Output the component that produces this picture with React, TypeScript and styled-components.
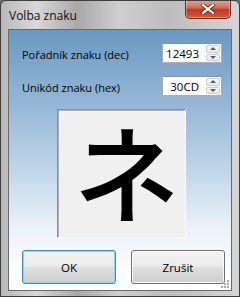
import React from "react";
import styled, { createGlobalStyle } from "styled-components";

const Global = createGlobalStyle`
  html, body { margin: 0; padding: 0; background: #6b6b6b; }
  body { font-family: "Open Sans", "Noto Sans", sans-serif; }
  * { box-sizing: border-box; }
`;

const Window = styled.div`
  width: 240px;
  height: 297px;
  display: flex;
  flex-direction: column;
  border: 1px solid #3e3e3e;
  border-radius: 6px 6px 0 0;
  background: linear-gradient(90deg, #b9b9b9 0%, #d8d8d8 15%, #a9a9a9 32%, #cfcfcf 50%, #bdbdbd 70%, #d4d4d4 100%);
  overflow: hidden;
`;

const TitleBar = styled.div`
  height: 28px;
  display: flex;
  align-items: flex-start;
  justify-content: space-between;
  padding-left: 8px;
  padding-right: 8px;
`;

const Title = styled.div`
  font-family: "Open Sans", "Noto Sans", sans-serif;
  font-size: 12px;
  color: #111;
  margin-top: 6px;
`;

const CloseButton = styled.div`
  width: 46px;
  height: 19px;
  margin-top: -1px;
  border: 1px solid #6b2a22;
  border-top: none;
  border-radius: 0 0 5px 5px;
  background: linear-gradient(180deg, #e8a595 0%, #d46f5c 40%, #c0391f 55%, #cf5a3d 100%);
  display: flex;
  align-items: center;
  justify-content: center;
  box-shadow: inset 0 0 0 1px rgba(255, 255, 255, 0.35);
`;

const Client = styled.div`
  flex: 1;
  margin: 0 7px 5px 7px;
  border: 1px solid #6a6a6a;
  background: linear-gradient(180deg, #6b99c2 0%, #8fb3d4 25%, #c2d7ea 55%, #e9f1f8 75%, #ffffff 95%);
  display: flex;
  flex-direction: column;
  position: relative;
  padding-top: 13px;
`;

const FieldRow = styled.div`
  display: flex;
  align-items: center;
  justify-content: space-between;
  padding: 0 9px 0 13px;
  margin-bottom: 13px;
`;

const Label = styled.div`
  font-size: 11px;
  color: #000;
  margin-top: 3px;
`;

const Spin = styled.div`
  width: 60px;
  height: 20px;
  display: flex;
  border: 1px solid #abadb3;
  border-top-color: #8e9099;
  background: #fff;
  padding: 1px 1px 1px 0;
`;

const SpinValue = styled.div`
  flex: 1;
  font-size: 11.5px;
  text-align: right;
  padding-right: 7px;
  line-height: 17px;
  color: #000;
`;

const SpinButtons = styled.div`
  width: 14px;
  display: flex;
  flex-direction: column;
  gap: 1px;
`;

const SpinBtn = styled.div`
  flex: 1;
  border: 1px solid #c8ccd4;
  border-radius: 2px;
  background: linear-gradient(180deg, #f7f8fa 0%, #e6e8ec 100%);
  display: flex;
  align-items: center;
  justify-content: center;
`;

const Arrow = styled.div<{ $down?: boolean }>`
  width: 0;
  height: 0;
  border-left: 3px solid transparent;
  border-right: 3px solid transparent;
  ${(p) => (p.$down ? "border-top: 3px solid #4a5d80;" : "border-bottom: 3px solid #4a5d80;")}
`;

const Preview = styled.div`
  width: 129px;
  height: 129px;
  margin: 0 0 0 48px;
  background: #f0f0f0;
  border: 1px solid #8e8e8e;
  border-right-color: #ffffff;
  border-bottom-color: #ffffff;
  box-shadow: inset 1px 1px 0 #b0b0b0;
  display: flex;
  align-items: center;
  justify-content: center;
`;

const Glyph = styled.div`
  font-family: "Noto Sans CJK JP", sans-serif;
  font-size: 106px;
  font-weight: 500;
  line-height: 106px;
  height: 106px;
  color: #000;
  margin-top: -9px;
  margin-left: 10px;
`;

const ButtonRow = styled.div`
  display: flex;
  gap: 15px;
  padding-left: 13px;
  margin-top: 12px;
`;

const Button = styled.div<{ $focused?: boolean }>`
  width: 94px;
  height: 34px;
  border: 1px solid ${(p) => (p.$focused ? "#3c8fb8" : "#707070")};
  border-radius: 3px;
  background: linear-gradient(180deg, #f2f2f2 0%, #ebebeb 48%, #dddddd 52%, #cfcfcf 100%);
  box-shadow: inset 0 0 0 1px ${(p) => (p.$focused ? "#8fd6f5" : "#fbfbfb")};
  display: flex;
  align-items: center;
  justify-content: center;
  font-size: 11.5px;
  color: #000;
`;

const Grip = styled.svg`
  position: absolute;
  right: 1px;
  bottom: 1px;
`;

export default function App() {
  return (
    <>
      <Global />
      <Window>
        <TitleBar>
          <Title>Volba znaku</Title>
          <CloseButton>
            <svg width="14" height="10" viewBox="0 0 14 10">
              <path d="M2 1 L12 9 M12 1 L2 9" stroke="#5a1f14" strokeWidth="3.6" strokeLinecap="square" />
              <path d="M2 1 L12 9 M12 1 L2 9" stroke="#ffffff" strokeWidth="2.2" strokeLinecap="square" />
            </svg>
          </CloseButton>
        </TitleBar>
        <Client>
          <FieldRow>
            <Label>Pořadník znaku (dec)</Label>
            <Spin>
              <SpinValue>12493</SpinValue>
              <SpinButtons>
                <SpinBtn><Arrow /></SpinBtn>
                <SpinBtn><Arrow $down /></SpinBtn>
              </SpinButtons>
            </Spin>
          </FieldRow>
          <FieldRow>
            <Label>Unikód znaku (hex)</Label>
            <Spin>
              <SpinValue>30CD</SpinValue>
              <SpinButtons>
                <SpinBtn><Arrow /></SpinBtn>
                <SpinBtn><Arrow $down /></SpinBtn>
              </SpinButtons>
            </Spin>
          </FieldRow>
          <Preview>
            <Glyph>ネ</Glyph>
          </Preview>
          <ButtonRow>
            <Button $focused>OK</Button>
            <Button>Zrušit</Button>
          </ButtonRow>
          <Grip width="10" height="10" viewBox="0 0 10 10">
            <g fill="#a8a8a8">
              <rect x="7" y="1" width="2" height="2" />
              <rect x="4" y="4" width="2" height="2" />
              <rect x="7" y="4" width="2" height="2" />
              <rect x="1" y="7" width="2" height="2" />
              <rect x="4" y="7" width="2" height="2" />
              <rect x="7" y="7" width="2" height="2" />
            </g>
          </Grip>
        </Client>
      </Window>
    </>
  );
}
